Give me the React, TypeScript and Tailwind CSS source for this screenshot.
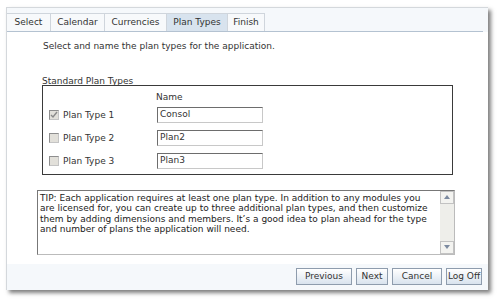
import React from "react";

const font = { fontFamily: '"DejaVu Sans", Verdana, sans-serif' };

const tabs = [
  { label: "Select", w: "w-[44px]" },
  { label: "Calendar", w: "w-[54px]" },
  { label: "Currencies", w: "w-[62px]" },
  { label: "Plan Types", w: "w-[61px]" },
  { label: "Finish", w: "w-[37px]" },
];

const planRows = [
  { label: "Plan Type 1", name: "Consol", checked: true },
  { label: "Plan Type 2", name: "Plan2", checked: false },
  { label: "Plan Type 3", name: "Plan3", checked: false },
];

const tipLines = [
  "TIP: Each application requires at least one plan type. In addition to any modules you",
  "are licensed for, you can create up to three additional plan types, and then customize",
  "them by adding dimensions and members. It\u2019s a good idea to plan ahead for the type",
  "and number of plans the application will need.",
];

function Checkbox({ checked }: { checked: boolean }) {
  return (
    <span className="w-[10px] h-[10px] border border-t-[#8e8e8e] border-l-[#8e8e8e] border-r-[#c4c4c4] border-b-[#c4c4c4] bg-[#e2e0da] flex items-center justify-center">
      {checked && (
        <svg width="8" height="8" viewBox="0 0 8 8">
          <path d="M1 4 L3 6 L7 1" stroke="#8a8a8a" strokeWidth="1.4" fill="none" />
        </svg>
      )}
    </span>
  );
}

function Button({ label, width }: { label: string; width: string }) {
  return (
    <button
      className={
        "h-[17px] border border-[#8e9cad] bg-gradient-to-b from-[#ffffff] to-[#d9e3ee] text-[9px] text-[#333] leading-none " +
        width
      }
    >
      {label}
    </button>
  );
}

function App() {
  return (
    <div className="w-[500px] h-[302px] bg-white pt-[7px] pl-[6px] text-[#333]" style={font}>
      <div className="w-[482px] h-[283px] bg-[#f5f8fb] border-l border-t border-[#d4d8dc] shadow-[3px_3px_4px_rgba(0,0,0,0.5)] flex flex-col">
        <div className="h-[24px] pt-[5px] flex items-end border-b border-[#b4c2d1] mr-[5px]">
          {tabs.map((t) => (
            <div
              key={t.label}
              className={
                "h-[18px] flex items-center justify-center text-[9px] border-r border-t border-[#cfd5dc] " +
                t.w +
                (t.label === "Plan Types" ? " bg-[#d8e3ee]" : " bg-[#f7f9fb]")
              }
            >
              {t.label}
            </div>
          ))}
        </div>
        <div className="h-[232px] bg-white pl-[35px] pt-[8px] flex flex-col">
          <div className="text-[9px] ml-[1px]">Select and name the plan types for the application.</div>
          <div className="text-[9px] mt-[22px] leading-[10px]">Standard Plan Types</div>
          <div className="w-[411px] h-[90px] border border-[#3a3a3a] -mt-[1px] pl-[6px] pt-[5px] flex flex-col">
            <div className="text-[9px] ml-[107px]">Name</div>
            <div className="flex flex-col gap-[7px] mt-[3px]">
              {planRows.map((r) => (
                <div key={r.label} className="flex items-center h-[16px]">
                  <Checkbox checked={r.checked} />
                  <span className="text-[9px] ml-[4px] w-[94px] mt-[2px]">{r.label}</span>
                  <div className="w-[106px] h-[16px] border border-t-[#6d6d6d] border-l-[#6d6d6d] border-r-[#c8c8c8] border-b-[#c8c8c8] text-[9px] pl-[2px] flex items-center">
                    {r.name}
                  </div>
                </div>
              ))}
            </div>
          </div>
          <div className="w-[418px] h-[65px] -ml-[5px] mt-[15px] border border-t-[#777] border-l-[#777] border-r-[#bbb] border-b-[#bbb] flex">
            <div className="flex-1 pl-[2px] pt-[2px] text-[9px] leading-[10.6px] text-[#222]">
              {tipLines.map((l) => (
                <div key={l} className="whitespace-nowrap">
                  {l}
                </div>
              ))}
            </div>
            <div className="w-[14px] bg-[#eeeeea] flex flex-col justify-between">
              <div className="w-[14px] h-[13px] border border-[#c2c2c2] bg-[#f3f3f0] flex items-center justify-center">
                <svg width="6" height="4" viewBox="0 0 6 4">
                  <path d="M0 4 L3 0 L6 4 Z" fill="#7c8aa0" />
                </svg>
              </div>
              <div className="w-[14px] h-[13px] border border-[#c2c2c2] bg-[#f3f3f0] flex items-center justify-center">
                <svg width="6" height="4" viewBox="0 0 6 4">
                  <path d="M0 0 L3 4 L6 0 Z" fill="#7c8aa0" />
                </svg>
              </div>
            </div>
          </div>
        </div>
        <div className="flex-1 flex items-start justify-end gap-[4px] pr-[6px] pt-[4px]">
          <Button label="Previous" width="w-[56px]" />
          <Button label="Next" width="w-[32px]" />
          <Button label="Cancel" width="w-[50px]" />
          <Button label="Log Off" width="w-[36px]" />
        </div>
      </div>
    </div>
  );
}

export default App;
